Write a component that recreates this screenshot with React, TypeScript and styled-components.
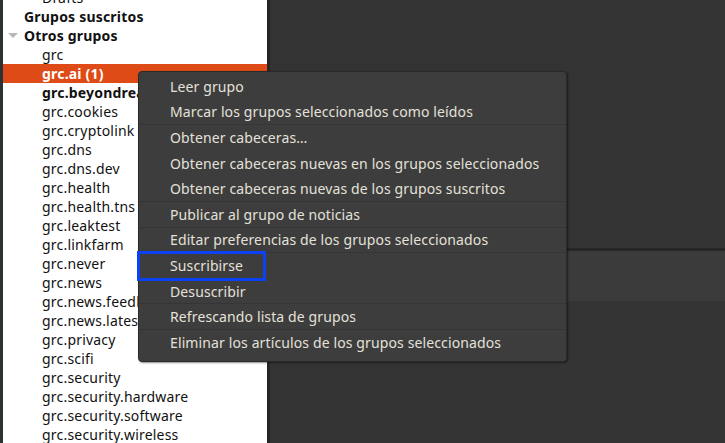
import styled, { createGlobalStyle } from 'styled-components'

const GlobalStyle = createGlobalStyle`
  html, body {
    margin: 0;
    padding: 0;
    background: #333333;
  }
  body {
    font-family: 'Noto Sans', 'DejaVu Sans', sans-serif;
  }
`

type Group = {
  name: string
  depth: number
  bold?: boolean
  selected?: boolean
  expander?: boolean
}

const groups: Group[] = [
  { name: 'Drafts', depth: 2 },
  { name: 'Grupos suscritos', depth: 1, bold: true },
  { name: 'Otros grupos', depth: 1, bold: true, expander: true },
  { name: 'grc', depth: 2 },
  { name: 'grc.ai (1)', depth: 2, bold: true, selected: true },
  { name: 'grc.beyondreality', depth: 2, bold: true },
  { name: 'grc.cookies', depth: 2 },
  { name: 'grc.cryptolink', depth: 2 },
  { name: 'grc.dns', depth: 2 },
  { name: 'grc.dns.dev', depth: 2 },
  { name: 'grc.health', depth: 2 },
  { name: 'grc.health.tns', depth: 2 },
  { name: 'grc.leaktest', depth: 2 },
  { name: 'grc.linkfarm', depth: 2 },
  { name: 'grc.never', depth: 2 },
  { name: 'grc.news', depth: 2 },
  { name: 'grc.news.feedback', depth: 2 },
  { name: 'grc.news.latest', depth: 2 },
  { name: 'grc.privacy', depth: 2 },
  { name: 'grc.scifi', depth: 2 },
  { name: 'grc.security', depth: 2 },
  { name: 'grc.security.hardware', depth: 2 },
  { name: 'grc.security.software', depth: 2 },
  { name: 'grc.security.wireless', depth: 2 },
]

const menuItems: { label: string; sep?: boolean }[] = [
  { label: 'Leer grupo' },
  { label: 'Marcar los grupos seleccionados como leídos' },
  { label: 'Obtener cabeceras…', sep: true },
  { label: 'Obtener cabeceras nuevas en los grupos seleccionados' },
  { label: 'Obtener cabeceras nuevas de los grupos suscritos' },
  { label: 'Publicar al grupo de noticias', sep: true },
  { label: 'Editar preferencias de los grupos seleccionados', sep: true },
  { label: 'Suscribirse', sep: true },
  { label: 'Desuscribir' },
  { label: 'Refrescando lista de grupos', sep: true },
  { label: 'Eliminar los artículos de los grupos seleccionados', sep: true },
]

export default function App() {
  return (
    <>
      <GlobalStyle />
      <Window>
        <EdgeStrip />
        <TreePanel>
          <TreeList>
            {groups.map((g) => (
              <TreeRow key={g.name} $selected={g.selected}>
                <Indent $depth={g.depth}>
                  {g.expander && <Expander />}
                </Indent>
                <RowLabel $bold={g.bold}>{g.name}</RowLabel>
              </TreeRow>
            ))}
          </TreeList>
        </TreePanel>
        <PaneDivider />
        <RightPane>
          <ArticleArea />
          <HSeparator />
          <HeaderBand />
          <BodyArea />
        </RightPane>

        <ContextMenu>
          {menuItems.map((item) => (
            <MenuItem key={item.label} $sep={item.sep}>
              {item.label}
            </MenuItem>
          ))}
        </ContextMenu>
        <FocusBox />
      </Window>
    </>
  )
}

const Window = styled.div`
  position: relative;
  display: flex;
  width: 725px;
  height: 443px;
  overflow: hidden;
  background: #333333;
`

const EdgeStrip = styled.div`
  width: 3px;
  flex-shrink: 0;
  background: #2b3335;
`

const TreePanel = styled.div`
  width: 264px;
  flex-shrink: 0;
  background: #ffffff;
  overflow: hidden;
`

const TreeList = styled.div`
  margin-top: -12px;
`

const TreeRow = styled.div<{ $selected?: boolean }>`
  display: flex;
  align-items: center;
  height: 19px;
  white-space: nowrap;
  background: ${(p) => (p.$selected ? '#df4b16' : 'transparent')};
  color: ${(p) => (p.$selected ? '#ffffff' : '#111111')};
`

const Indent = styled.div<{ $depth: number }>`
  width: ${(p) => (p.$depth === 1 ? 21 : 39)}px;
  flex-shrink: 0;
  display: flex;
  align-items: center;
  padding-left: 5px;
  box-sizing: border-box;
`

const Expander = styled.span`
  width: 0;
  height: 0;
  border-left: 5px solid transparent;
  border-right: 5px solid transparent;
  border-top: 5px solid #b8b8b8;
`

const RowLabel = styled.span<{ $bold?: boolean }>`
  font-size: 14px;
  letter-spacing: 0.2px;
  font-weight: ${(p) => (p.$bold ? 700 : 400)};
`

const PaneDivider = styled.div`
  width: 3px;
  flex-shrink: 0;
  background: #262626;
`

const RightPane = styled.div`
  flex: 1;
  display: flex;
  flex-direction: column;
`

const ArticleArea = styled.div`
  height: 248px;
  background: #333333;
`

const HSeparator = styled.div`
  height: 3px;
  background: #262626;
`

const HeaderBand = styled.div`
  height: 50px;
  background: #3b3b3b;
`

const BodyArea = styled.div`
  flex: 1;
  background: #343434;
`

const ContextMenu = styled.div`
  position: absolute;
  left: 138px;
  top: 71px;
  width: 429px;
  padding: 1px 0 6px;
  background: #3d3d3d;
  border: 1px solid #2a2a2a;
  border-radius: 4px;
  box-shadow: 1px 1px 2px rgba(0, 0, 0, 0.45);
  box-sizing: border-box;
`

const MenuItem = styled.div<{ $sep?: boolean }>`
  display: flex;
  align-items: center;
  height: 25.6px;
  padding-left: 31px;
  box-sizing: border-box;
  border-top: 1px solid ${(p) => (p.$sep ? '#353535' : 'transparent')};
  font-size: 14px;
  letter-spacing: 0.12px;
  color: #e4e1da;
  white-space: nowrap;
`

const FocusBox = styled.div`
  position: absolute;
  left: 137px;
  top: 251px;
  width: 129px;
  height: 30px;
  border: 3px solid #0c42f4;
  box-sizing: border-box;
  pointer-events: none;
`
